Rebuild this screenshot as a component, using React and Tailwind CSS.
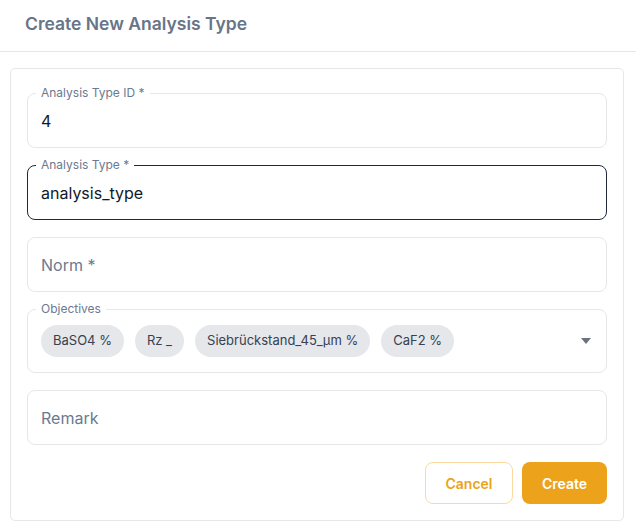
import React from 'react';

const font = { fontFamily: 'Inter, "Noto Sans", sans-serif' };

const Campo = ({ label, value, placeholder, focused }) => (
  <div
    className={`relative h-[55px] rounded-lg border flex items-center px-[13px] ${
      focused ? 'border-[#1f2937]' : 'border-[#e5e7eb]'
    }`}
  >
    {label && (
      <span className="absolute -top-[8px] left-[8px] px-[5px] bg-white text-[12px] leading-[14px] text-[#6b7a90]">
        {label}
      </span>
    )}
    {value ? (
      <span className="text-[16px] text-[#111827]">{value}</span>
    ) : (
      <span className="text-[16px] text-[#6b7a90]">{placeholder}</span>
    )}
  </div>
);

const Chip = ({ children }) => (
  <span className="h-[32px] px-[12px] rounded-full bg-[#e5e7eb] text-[13px] text-[#374151] flex items-center whitespace-nowrap">
    {children}
  </span>
);

const objetivos = ['BaSO4 %', 'Rz _', 'Siebrückstand_45_µm %', 'CaF2 %'];

export default function App() {
  return (
    <div className="w-[636px] h-[532px] bg-white" style={font}>
      <div className="h-[52px] border-b border-[#e5e7eb] flex items-center px-[25px] pb-[2px]">
        <h1 className="text-[17.5px] font-semibold text-[#687488]">Create New Analysis Type</h1>
      </div>
      <div className="ml-[10px] mr-[12px] mt-[16px] border border-[#e5e7eb] rounded-[5px] px-[16px] pt-[24px] pb-[16px] flex flex-col gap-[17px]">
        <Campo label="Analysis Type ID *" value="4" />
        <Campo label="Analysis Type *" value="analysis_type" focused />
        <Campo placeholder="Norm *" />
        <div className="relative h-[64px] rounded-lg border border-[#e5e7eb] flex items-center pl-[13px] pr-[14px]">
          <span className="absolute -top-[8px] left-[8px] px-[5px] bg-white text-[12px] leading-[14px] text-[#6b7a90]">
            Objectives
          </span>
          <div className="flex gap-[11px] flex-1">
            {objetivos.map((o) => (
              <Chip key={o}>{o}</Chip>
            ))}
          </div>
          <svg width="10" height="6" viewBox="0 0 10 6" className="mr-[1px]">
            <path d="M0 0h10L5 6z" fill="#6b7280" />
          </svg>
        </div>
        <Campo placeholder="Remark" />
        <div className="flex justify-end gap-[9px]">
          <button className="w-[88px] h-[42px] rounded-lg border border-[#fcd9a0] text-[14px] font-semibold text-[#eba31a] bg-white">
            Cancel
          </button>
          <button className="w-[85px] h-[42px] rounded-lg bg-[#eca21a] text-[14px] font-semibold text-white">
            Create
          </button>
        </div>
      </div>
    </div>
  );
}
